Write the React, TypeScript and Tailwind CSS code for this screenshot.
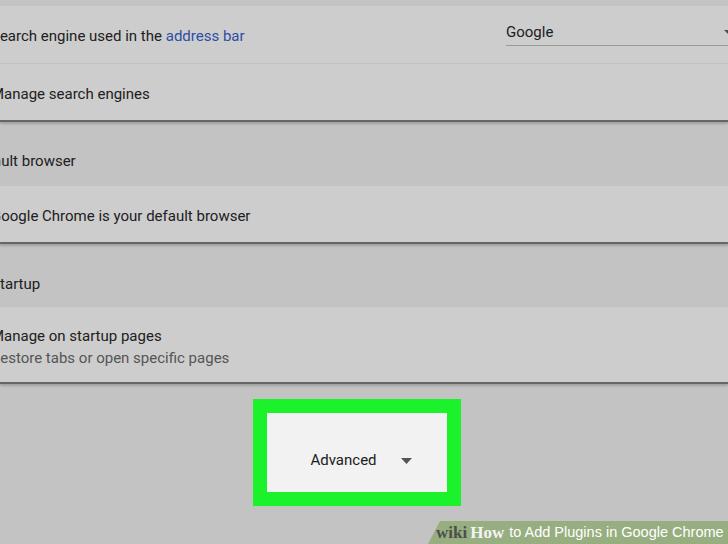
import { ReactNode } from 'react';

const Card = ({ children }: { children: ReactNode }) => (
  <div className="bg-[#cdcdcd] border-b-2 border-[#666666] shadow-[0_2px_2px_rgba(0,0,0,0.18)]">{children}</div>
);

const Header = ({ title, top, bottom }: { title: string; top: string; bottom: string }) => (
  <div className={`${top} ${bottom} -ml-[30px] text-[15px] leading-[18px] text-[#202020]`}>{title}</div>
);

export default function App() {
  return (
    <div className="relative w-[728px] h-[544px] overflow-hidden bg-[#c3c3c3] font-['Roboto',sans-serif]">
      <div className="h-[6px]" />
      <Card>
        <div className="h-[58px] flex justify-between -ml-[9px] border-b border-[#c2c2c2]">
          <span className="self-center pt-[4px] text-[15px] text-[#202020]">
            Search engine used in the <span className="text-[#2e4ea6]">address bar</span>
          </span>
          <div className="self-start w-[228px] h-[26px] mt-[14px] flex items-center justify-between border-b border-[#9a9a9a] -mr-[6px]">
            <span className="text-[15px] text-[#202020]">Google</span>
            <svg width="12" height="6" viewBox="0 0 12 6" className="mr-[-2px]">
              <polygon points="0,0 12,0 6,6" fill="#505050" />
            </svg>
          </div>
        </div>
        <div className="h-[56px] flex items-center pt-[4px] -ml-[9px]">
          <span className="text-[15px] text-[#202020]">Manage search engines</span>
        </div>
      </Card>

      <Header title="Default browser" top="pt-[30px]" bottom="pb-[16px]" />

      <Card>
        <div className="h-[56px] flex items-center pt-[4px] -ml-[9px]">
          <span className="text-[15px] text-[#202020]">Google Chrome is your default browser</span>
        </div>
      </Card>

      <Header title="On startup" top="pt-[31px]" bottom="pb-[14px]" />

      <Card>
        <div className="h-[75px] flex flex-col justify-center -ml-[9px] pt-[4px]">
          <span className="text-[15px] leading-[22px] text-[#202020]">Manage on startup pages</span>
          <span className="text-[15px] leading-[22px] text-[#555555]">Restore tabs or open specific pages</span>
        </div>
      </Card>

      <div className="flex pt-[15px] pl-[253px]">
        <div className="w-[208px] h-[107px] bg-[#1cf22b] p-[14px]">
          <div className="w-full h-full bg-[#f2f2f2] flex items-center justify-center gap-[24px] pt-[16px] pl-[8px]">
            <span className="text-[15px] text-[#202020]">Advanced</span>
            <svg width="11" height="6" viewBox="0 0 11 6">
              <polygon points="0,0 11,0 5.5,6" fill="#555555" />
            </svg>
          </div>
        </div>
      </div>

      <div className="absolute right-0 bottom-0 w-[300px] h-[23px] bg-[#97ae80] [clip-path:polygon(12px_0,100%_0,100%_100%,0_100%)] flex items-center whitespace-nowrap pl-[8px] gap-[5px]">
        <span className="font-['Liberation_Serif',serif] font-bold text-[17px] leading-none">
          <span className="text-[#4e4e4e]">wiki</span>
          <span className="text-[#f4f4f4] ml-[3px]">How</span>
        </span>
        <span className="text-[14.5px] leading-none text-white font-['Liberation_Sans',sans-serif]">to Add Plugins in Google Chrome</span>
      </div>
    </div>
  );
}
